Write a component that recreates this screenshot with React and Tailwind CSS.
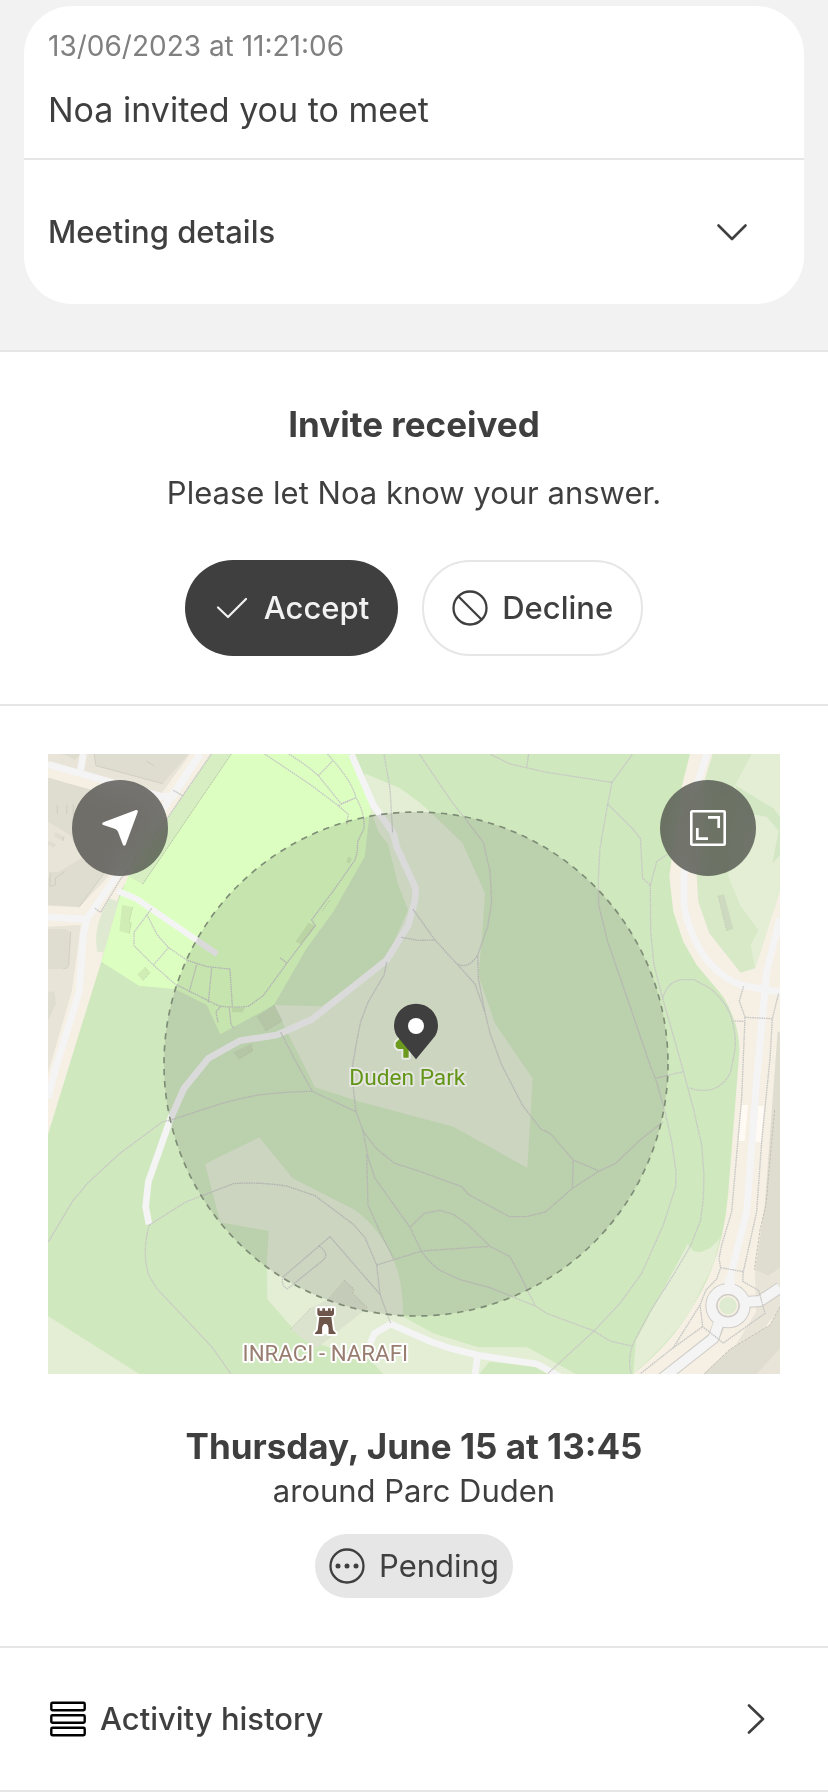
import React from 'react';

const stroke = { fill: 'none', stroke: 'currentColor', strokeLinecap: 'round', strokeLinejoin: 'round' };

function ChevronDown() {
  return (
    <svg className="size-9" viewBox="0 0 36 36" aria-hidden="true">
      <path d="M4.500 11.500 18 25 31.500 11.500" {...stroke} strokeWidth="2.600" />
    </svg>
  );
}

function ChevronRight() {
  return (
    <svg className="size-9" viewBox="0 0 36 36" aria-hidden="true">
      <path d="M11 4.500 25 18 11 31.500" {...stroke} strokeWidth="2.600" />
    </svg>
  );
}

function CheckIcon() {
  return (
    <svg className="size-9" viewBox="0 0 36 36" aria-hidden="true">
      <path d="M4 17.500 14 27 32 9" {...stroke} strokeWidth="2.200" />
    </svg>
  );
}

function DeclineIcon() {
  return (
    <svg className="size-9" viewBox="0 0 36 36" aria-hidden="true">
      <circle cx="18" cy="18" r="16.500" {...stroke} strokeWidth="2.300" />
      <path d="M6.500 6.500 29.500 29.500" {...stroke} strokeWidth="2.300" />
    </svg>
  );
}

function PendingIcon() {
  return (
    <svg className="size-9" viewBox="0 0 36 36" aria-hidden="true">
      <circle cx="18" cy="18" r="16.500" {...stroke} strokeWidth="2.300" />
      <g fill="currentColor">
        <circle cx="9" cy="18" r="2.500" />
        <circle cx="18" cy="18" r="2.500" />
        <circle cx="27" cy="18" r="2.500" />
      </g>
    </svg>
  );
}

function HistoryIcon() {
  return (
    <svg className="size-9 text-black" viewBox="0 0 36 36" aria-hidden="true">
      <g {...stroke} strokeWidth="2.400">
        <rect x="1.300" y="1.700" width="33.400" height="7.600" rx="1.200" />
        <rect x="1.300" y="14.200" width="33.400" height="7.600" rx="1.200" />
        <rect x="1.300" y="26.700" width="33.400" height="7.600" rx="1.200" />
      </g>
    </svg>
  );
}

function LocateIcon() {
  return (
    <svg className="size-9" viewBox="0 0 108 108" aria-hidden="true">
      <path
        d="M102 0 4 37Q-3 41 4 45L40 57Q46 60 48 65L63 105Q67 110 71 104L107 7Q109-1 102 0Z"
        fill="currentColor"
      />
    </svg>
  );
}

function ExpandIcon() {
  return (
    <svg className="size-9" viewBox="0 0 36 36" aria-hidden="true">
      <rect x="1.300" y="1.300" width="33.400" height="33.400" rx="1" fill="none" stroke="currentColor" strokeWidth="2.600" />
      <path d="M18 7.300H28.700V18M7.300 18V28.700H18" fill="none" stroke="currentColor" strokeWidth="2.700" />
    </svg>
  );
}

const PALE = '#e3eed5';
const GREEN = '#d0e8be';
const BEIGE = '#f5efe4';
const BLOCK = '#e8e4d8';
const BUILDING = '#dfdcd0';

const footpaths = [
  'M514 27 385 215 240 405 182 502 163 489M400 136l28 16',
  'M674 27 810 118 895 182 925 208 920 238M746 27Q800 60 835 92L903 176 948 158M835 92 878 48M895 182 948 158M862 27Q935 105 948 158Q975 205 972 250L953 290 952 320 945 345 876 443 855 470 815 525 826 542 740 655 670 752 625 784Q575 790 535 782L405 717 340 660 282 602 282 562 335 490M720 638l20 16',
  'M320 508 352 570 386 608 440 645 500 665 570 672 577 785M386 608 340 660M470 660 447 742M515 670 505 772M541 786 528 800 534 832M568 790 573 838 582 850',
  'M1032 27 1050 130 1058 265',
  'M1040 652 1032 690 985 770 962 830 950 890 938 960 940 1030 948 1100 970 1160 1008 1210 1064 1255 1142 1280 1265 1325 1285 1348 1408 1415 1458 1415 1516 1401 1597 1330 1678 1278 1727 1255 1800 1185 1870 1130',
  'M722 862 765 945 817 1039 948 1100M817 1039Q735 1040 655 1050 590 1062 530 1080L390 1126 368 1130 240 1225 145 1312 98 1368 24 1492',
  'M1084 577 1135 586 1185 585M1119 493 1185 585 1250 656Q1285 675 1313 630M1250 656 1305 717 1335 802 1350 865 1385 960 1447 1080 1502 1152 1530 1165 1600 1245 1678 1278M1600 1245 1597 1330M1313 630 1315 700 1335 802',
  'M1138 27 1235 170 1275 220 1330 292 1350 380 1355 470 1343 545 1313 630',
  'M1350 27 1410 57 1520 82 1716 112 1778 27M1460 67 1466 27M1716 112 1703 177 1680 310 1675 400 1676 480 1703 590 1755 740 1830 960 1848 1005 1875 1100 1895 1190 1908 1280 1907 1325 1870 1440 1805 1585 1740 1675 1662 1758 1522 1887',
  'M1703 177 1775 248 1801 280 1808 400 1831 421 1850 350 1882 328M1831 421 1832 560 1842 660 1868 760 1925 960 1960 1090 1985 1200 1992 1290 1990 1360 1982 1425 1953 1500 1900 1590 1830 1700 1785 1785Q1760 1835 1774 1887',
  'M1868 760Q1882 710 1925 704L1963 704 2010 730Q2065 775 2077 830 2090 880 2084 920L2072 980Q2045 1040 1980 1036 1960 1034 1948 1028M1845 1000 1930 980M2077 828 2113 829',
  'M328 1440 435 1372 580 1316Q650 1310 740 1323L825 1352 940 1438 975 1478 1010 1560 1020 1648 1052 1735M328 1440Q305 1520 326 1590L350 1630 515 1805 573 1887M980 1230 984 1380 1020 1460 1060 1540M968 1155 985 1240 1005 1300 1110 1447 1145 1520Q1175 1560 1200 1576L1260 1604 1350 1628 1486 1683 1520 1705 1660 1757 1710 1788 1775 1803',
  'M1110 1447 1153 1405 1200 1396 1240 1408 1285 1440 1350 1504 1410 1535 1440 1590 1486 1683M1010 1560 1145 1518 1350 1504M1020 1648 870 1475 730 1595Q720 1620 742 1632L850 1545Q870 1525 835 1502',
  'M2111 724 2098 768 2115 817 2197 821 2216 745M2115 817 2105 1060 2075 1400 2045 1500 2037 1540 2042 1568 2030 1602 1998 1635 1980 1680 1988 1745 2050 1794 2175 1705 2156 1636 2108 1609 2110 1580 2150 1400 2165 1190 2190 940 2197 821M2042 1568 2110 1580M1980 1680 1900 1808 1988 1745M1900 1808 1800 1887',
];

function ParkMap() {
  return (
    <svg
      className="block h-auto w-full"
      viewBox="24 27 2196 1860"
      role="img"
      aria-label="Map of the area around Duden Park"
    >
      <rect x="24" y="27" width="2196" height="1860" fill={GREEN} />

      <path d="M24 27H514L240 440 184 650 88 960 24 1168Z" fill={BEIGE} />
      <path d="M24 27H450L365 145 24 50ZM24 98 345 190 200 400 118 487 24 482Z" fill={BLOCK} />
      <path d="M24 545 122 540 112 620 95 740 24 985Z" fill={BLOCK} />
      <path d="M162 27H446L368 116 168 62ZM62 27h60l-18 18-20-12ZM24 98 335 185 240 320 118 485 24 480V400L125 340 90 270 24 230Z" fill={BUILDING} />
      <path d="M24 553 72 552Q92 555 92 570L86 660Q82 672 70 671L24 672ZM24 740l20 0 4 36-24 50Z" fill={BUILDING} />
      <path d="M24 180 100 176V214H80V206L52 210V200L24 206ZM46 262l28 14-4 12-28-14ZM26 288l22 10-6 10-20-10ZM30 382v42l16-4v-20l28-20" fill={BUILDING} />
      <path d="M162 27 168 62 368 116M118 485 200 375M92 560 86 660Q82 672 70 671M30 382v42l16-4v-20l28-20M52 180v26M80 180v26M100 178v32M72 276l-4 12M318 48l24 14" fill="none" stroke="#c9c5bb" strokeWidth="2" />
      <path d="M205 460 240 470 190 622 172 620Q160 570 185 505Z" fill="#dfe9d2" />

      <path d="M514 27H574L308 418 265 393Z" fill="#d7edc2" />
      <path d="M574 27H926L1000 190 988 215 974 335 880 500 800 610 702 780 541 868 500 780 405 732 297 722 184 650 240 455 265 393 308 418Z" fill="#dcffc1" />
      <path d="M574 27 308 418" stroke="#b5c4a6" strokeWidth="3" strokeDasharray="4 2" />
      <path d="M974 85 1080 130 1140 173 1180 210 1268 295 1335 445 1325 590 1315 690 1365 835 1450 960 1478 1000 1462 1269 1240 1145 960 1070 825 1027 700 780 845 784 1040 640 1104 495 1075 420 1045 300 1015 260 990 190Z" fill={PALE} />
      <path d="M700 780 790 962 720 870 650 820Z" fill={GREEN} />
      <path d="M650 815 702 780 726 828 676 857ZM580 922 630 898 638 918 596 942Z" fill="#c9dcb8" />
      <path d="M702 780 726 828 676 857M634 898 638 918 596 942" fill="none" stroke="#b5bba9" strokeWidth="2" strokeDasharray="3 3" />
      <path d="M246 480 278 486 268 530 274 534 268 566 238 558ZM292 688 315 667 330 683 308 707ZM766 590 805 534 828 542 782 596ZM918 350l8-16 10 8-8 14ZM576 788h38l-6 14-32 0Z" fill="#cfedb4" />
      <path d="M278 486 268 530 274 534 268 566M315 667 330 683 308 707M822 545 782 596M869 466 847 497" fill="none" stroke="#b3c3a3" strokeWidth="2" strokeDasharray="4 3" />

      <path d="M495 1257 658 1177 757 1299 945 1395Q1020 1450 1060 1545 1088 1600 1090 1715L1180 1765 1315 1807H1462L1607 1887H1030L890 1815 785 1780 682 1663 681 1545 686 1458 541 1432Z" fill={PALE} />
      <path d="M1318 1887 1348 1850 1490 1866 1530 1887ZM1030 1887 890 1812 985 1840Z" fill={GREEN} />
      <path d="M24 1713 298 1887H24Z" fill={PALE} />
      <path d="M752 1752 812 1690 860 1665 912 1605 942 1632 938 1645 982 1688 830 1810 785 1780Z" fill="#dbe2cd" />
      <path d="M752 1752 812 1690M912 1605l30 27-4 13 44 43" fill="none" stroke="#bcbcae" strokeWidth="2" strokeDasharray="6 4" />

      <path d="M1950 27H2220V1887H1780Q1900 1790 1960 1680 2050 1540 2065 1340L2098 920Q2100 840 2050 755L1970 660 1930 590 1900 500 1888 395 1900 300 1925 125Z" fill={BEIGE} />
      <path d="M2018 27H2220V435L2145 670 2102 683 2008 565 1975 470 1970 390 1980 150Z" fill="#d7e9c6" />
      <path d="M2135 27H2220V435L2145 668 2132 600 2155 555 2100 480 2065 395 2080 130Z" fill={PALE} />
      <path d="M2085 120 2200 190 2220 215V330L2197 355 2216 258 2180 215 2120 205Z" fill="#d3e7c4" />
      <path d="M2034 452 2052 448 2080 552 2060 558Z" fill="#cddabf" />
      <path d="M2034 452 2060 558" stroke="#b9c1ae" strokeWidth="2" strokeDasharray="4 4" />
      <path d="M1943 1497 1960 1518 1980 1522 2010 1510 2040 1480 2020 1560 1950 1700Q1880 1800 1780 1887L1788 1785Z" fill={PALE} />
      <path d="M2213 860H2220V1570L2185 1593 2145 1575 2175 1375Z" fill={BUILDING} />
      <path d="M2145 1575 2185 1593 2220 1570V1690L2140 1790 2080 1813 2148 1700Z" fill={BLOCK} />
      <path d="M2220 1685 2190 1740 2070 1813 1990 1887H2220Z" fill={BUILDING} />
      <path d="M2150 1887 2220 1810V1887Z" fill={BLOCK} />
      <path d="M2204 1095 2190 1245 2178 1380 2160 1455 2143 1575M2220 1685 2190 1740 2070 1813 1992 1887" fill="none" stroke="#c5c1b7" strokeWidth="3" strokeDasharray="8 4" />
      <path d="M2104 1080H2124L2114 1188H2096ZM2154 1083H2172L2164 1191H2146Z" fill="#fffbf4" />

      <g fill="none" stroke="#f4f4f4">
        <path d="M24 58 365 155 400 152 480 27M130 27 122 75" strokeWidth="21" />
        <path d="M480 27 360 205 225 400 142 520 130 570 118 740 45 975 24 1060M24 516 140 523" strokeWidth="21" />
        <path d="M232 437 290 462 532 628" strokeWidth="18" />
        <path d="M934 27 1000 180 1060 265 1070 305 1127 430 1125 465 1105 540 1040 645 815 824 710 870 600 887 505 940 432 1030 392 1120 325 1310 317 1385 327 1438" strokeWidth="20" />
        <path d="M990 1795 1004 1765 1052 1737 1165 1787 1230 1810 1320 1832 1490 1857 1560 1895M1313 1832 1305 1887" strokeWidth="20" />
        <path d="M2000 27 1945 200 1932 400 1932 480Q1945 560 1990 630 2040 700 2110 722L2220 742" strokeWidth="21" />
        <path d="M2220 520 2180 680 2167 820 2150 1000 2138 1170 2120 1400 2065 1620" strokeWidth="21" />
      </g>

      <g fill="none" strokeLinejoin="round">
        <path d="M2038 1733 2020 1780 1865 1902M2110 1672 2160 1668 2220 1628" stroke="#cfccc7" strokeWidth="36" />
        <circle cx="2064" cy="1682" r="50" stroke="#cfccc7" strokeWidth="36" />
        <path d="M2040 1722 2020 1780 1865 1902M2105 1672 2160 1668 2220 1628M2068 1645 2070 1600" stroke="#f4f4f4" strokeWidth="30" />
        <circle cx="2064" cy="1682" r="50" stroke="#f4f4f4" strokeWidth="30" />
      </g>
      <circle cx="2064" cy="1682" r="33" fill={BEIGE} stroke="#cfccc7" strokeWidth="4" />
      <circle cx="2064" cy="1682" r="26" fill="#dfebd0" />

      <g fill="none" stroke="#c6c7c5" strokeWidth="4" strokeDasharray="5 2">
        {footpaths.map((d) => (
          <path key={d} d={d} />
        ))}
      </g>

      <circle cx="1128" cy="957" r="756" fill="#3f3f3f" fillOpacity="0.140" stroke="#7f8d77" strokeWidth="5" strokeDasharray="19 17" />

      <path
        d="M1090 938V912H1074L1067 905V893L1078 882H1120L1128 890 1106 905V938Z"
        fill="#6b9a1e"
        stroke="#e8ebe3"
        strokeWidth="12"
        paintOrder="stroke"
        strokeLinejoin="round"
      />
      <path d="M1128 943 1078 882Q1062 865 1062 842A66 66 0 0 1 1194 842Q1194 865 1178 882Z" fill="#3f3f3f" />
      <circle cx="1128" cy="843" r="24" fill="#fff" />

      <path
        d="M832 1690h7v7h8v-7h8v7h9v-7h8v7h4v-7h6v18l-5 5H836l-4-5ZM838 1716H874L879 1756 887 1764V1767H865V1748Q863 1737 856 1737T847 1748V1767H825V1764L833 1756Z"
        fill="#6f564b"
        stroke="#fff"
        strokeWidth="12"
        paintOrder="stroke"
        strokeLinejoin="round"
      />
      <path d="M847 1768V1748Q849 1737 856 1737T865 1748V1768Z" fill="#fff" />

      <g fontFamily="Roboto, 'Liberation Sans', sans-serif" textAnchor="middle" paintOrder="stroke" strokeLinejoin="round">
        <text x="1102" y="1021" fontSize="68" fill="#639618" stroke="#e4e6df" strokeWidth="12">
          Duden Park
        </text>
        <text x="856" y="1848" fontSize="67" fill="#987d70" stroke="#fff" strokeWidth="12">
          INRACI - NARAFI
        </text>
      </g>
    </svg>
  );
}

const mapButton =
  'absolute top-[26px] flex size-24 items-center justify-center rounded-full bg-[#3f3f3f]/70 text-white backdrop-blur-md backdrop-saturate-150';

export default function App() {
  return (
    <main className="bg-white font-[Inter,'Liberation_Sans',sans-serif] text-[#3f3f3f]">
      <header className="border-b-2 border-[#e6e6e6] bg-[#f2f2f2] px-6 pt-[6px] pb-[46px]">
        <article className="rounded-[48px] bg-white">
          <div className="flex flex-col gap-6 border-b-2 border-[#e6e6e6] px-6 pt-[22px] pb-[26px]">
            <time className="text-[28px] leading-9 text-[#808080]">13/06/2023 at 11:21:06</time>
            <h1 className="text-[34px] leading-[44px]">Noa invited you to meet</h1>
          </div>
          <button type="button" className="flex h-36 w-full items-center justify-between pr-[54px] pl-6 text-[31px] font-medium">
            Meeting details
            <ChevronDown />
          </button>
        </article>
      </header>

      <section className="flex flex-col items-center border-b-2 border-[#e6e6e6] px-6 py-12 text-center">
        <h2 className="text-[35px] leading-[48px] font-bold">Invite received</h2>
        <p className="mt-6 text-[31px] leading-[42px]">Please let Noa know your answer.</p>
        <div className="mt-[46px] flex gap-6 text-[31px] font-medium">
          <button type="button" className="flex h-24 items-center gap-[14px] rounded-full bg-[#3f3f3f] px-[29px] text-[#f2f2f2]">
            <CheckIcon />
            Accept
          </button>
          <button type="button" className="flex h-24 items-center gap-[14px] rounded-full border-2 border-[#e6e6e6] px-7">
            <DeclineIcon />
            Decline
          </button>
        </div>
      </section>

      <section className="border-b-2 border-[#e6e6e6] px-12 py-12">
        <div className="relative">
          <ParkMap />
          <button type="button" aria-label="Show my location" className={`${mapButton} left-6`}>
            <LocateIcon />
          </button>
          <button type="button" aria-label="Expand map" className={`${mapButton} right-6`}>
            <ExpandIcon />
          </button>
        </div>
        <div className="mt-12 flex flex-col items-center text-center">
          <h2 className="text-[35px] leading-[48px] font-bold">Thursday, June 15 at 13:45</h2>
          <p className="text-[31px] leading-[42px]">around Parc Duden</p>
          <p className="mt-[22px] flex h-16 items-center gap-[14px] rounded-full bg-[#e6e6e6] px-[14px] text-[31px]">
            <PendingIcon />
            Pending
          </p>
        </div>
      </section>

      <button type="button" className="flex h-36 w-full items-center gap-[14px] border-b-2 border-[#e6e6e6] pr-[54px] pl-[50px] text-[31px] font-medium">
        <HistoryIcon />
        <span className="grow text-left">Activity history</span>
        <ChevronRight />
      </button>
    </main>
  );
}
